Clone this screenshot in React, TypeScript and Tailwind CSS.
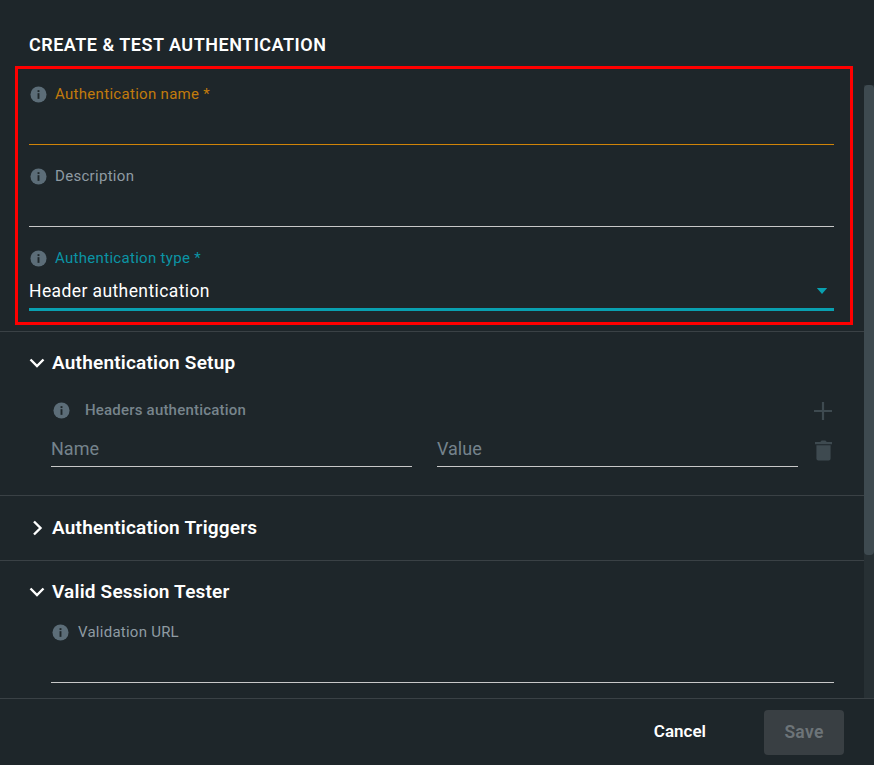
import { ReactNode } from "react";

const FONT = "font-['Roboto','Noto_Sans',sans-serif]";

function InfoIcon({ className = "" }: { className?: string }) {
  return (
    <svg viewBox="0 0 18 18" className={`w-[17px] h-[17px] shrink-0 ${className}`}>
      <circle cx="9" cy="9" r="8.5" fill="#5c6d78" />
      <rect x="8" y="4.4" width="2" height="2" fill="#1e262a" />
      <rect x="8" y="7.6" width="2" height="6" fill="#1e262a" />
    </svg>
  );
}

function Chevron({ open }: { open: boolean }) {
  return (
    <svg viewBox="0 0 16 16" className="w-4 h-4 shrink-0" fill="none" stroke="#fff" strokeWidth="2.4">
      {open ? <path d="M1.5 4.5 8 11l6.5-6.5" /> : <path d="M5 1.5 11.5 8 5 14.5" />}
    </svg>
  );
}

function Section({ title, open, className, children }: { title: string; open: boolean; className: string; children?: ReactNode }) {
  return (
    <section className={`border-b border-[#3a4145] ${className}`}>
      <div className="flex items-center gap-[7px] pl-[29px] h-[24px]">
        <Chevron open={open} />
        <h2 className="text-[19px] font-semibold text-white tracking-[0.2px]">{title}</h2>
      </div>
      {children}
    </section>
  );
}

export default function App() {
  return (
    <div className={`h-screen w-full overflow-hidden flex flex-col bg-[#1e262a] ${FONT}`}>
      <div className="flex-1 min-h-0 relative">
        {/* scrollbar */}
        <div className="absolute right-0 top-[85px] bottom-0 w-[10px] bg-[#273034]">
          <div className="h-[470px] rounded-[4px] bg-[#3e4a50]" />
        </div>

        <div className="pr-[10px]">
          <h1 className="pl-[29px] pt-[34px] h-[66px] text-[18px] leading-[22px] font-semibold text-white tracking-[0.5px] whitespace-nowrap">
            CREATE &amp; TEST AUTHENTICATION
          </h1>

          <div className="ml-[15px] w-[838px] h-[259px] border-[3px] border-[#f00] pl-[11px] pr-[16px]">
            <div className="h-[76px] border-b border-[#d08408]">
              <div className="flex items-center gap-[8px] pt-[16px] pl-[1px]">
                <InfoIcon />
                <span className="text-[15px] leading-[18px] tracking-[0.3px] text-[#c27b0c]">Authentication name *</span>
              </div>
            </div>
            <div className="h-[82px] border-b border-[#c8c8c8]">
              <div className="flex items-center gap-[8px] pt-[22px] pl-[1px]">
                <InfoIcon />
                <span className="text-[15px] leading-[18px] tracking-[0.3px] text-[#8f9ba3]">Description</span>
              </div>
            </div>
            <div className="h-[84px] border-b-[3px] border-[#09a0b0]">
              <div className="flex items-center gap-[8px] pt-[22px] pl-[1px]">
                <InfoIcon />
                <span className="text-[15px] leading-[18px] tracking-[0.3px] text-[#0b94a5]">Authentication type *</span>
              </div>
              <div className="flex items-center justify-between mt-[12px]">
                <span className="text-[17.5px] leading-[24px] tracking-[0.4px] text-white">Header authentication</span>
                <svg viewBox="0 0 12 7" className="w-[12px] h-[6px] mr-[6px]"><path d="M0 0h12L6 7z" fill="#09a0b0" /></svg>
              </div>
            </div>
          </div>

          <div className="h-[7px] border-b border-[#3a4145]" />

          <Section title="Authentication Setup" open className="pt-[19px] h-[164px]">
            <div className="pl-[51px] pr-[32px] pt-[25px]">
              <div className="flex items-center justify-between">
                <div className="flex items-center">
                  <InfoIcon className="ml-[2px]" />
                  <span className="ml-[15px] text-[15px] leading-[20px] tracking-[0.2px] font-medium text-[#77848c]">Headers authentication</span>
                </div>
                <svg viewBox="0 0 18 18" className="w-[18px] h-[18px] mt-[2px]" fill="none" stroke="#3e4a50" strokeWidth="2.2">
                  <path d="M9 0v18M0 9h18" />
                </svg>
              </div>
              <div className="flex items-start mt-[13px]">
                <div className="w-[361px] shrink-0 h-[34px] pt-[4px] border-b border-[#c8c8c8] text-[18px] leading-[24px] text-[#75838c]">Name</div>
                <div className="w-[361px] shrink-0 h-[34px] pt-[4px] ml-[25px] border-b border-[#c8c8c8] text-[18px] leading-[24px] text-[#75838c]">Value</div>
                <svg viewBox="0 0 18 22" className="w-[17px] h-[22px] ml-[17px] mt-[6px] shrink-0" fill="#3e4a50">
                  <path d="M0 2.5h5.5L7 1h4l1.5 1.5H18V5H0zM1.5 6h15v14a2 2 0 0 1-2 2h-11a2 2 0 0 1-2-2z" />
                </svg>
              </div>
            </div>
          </Section>

          <Section title="Authentication Triggers" open={false} className="pt-[20px] h-[65px]" />

          <Section title="Valid Session Tester" open className="pt-[19px] h-[138px] border-b-0">
            <div className="pl-[51px] pr-[30px]">
              <div className="flex items-center gap-[9px] pt-[19px] pl-[1px]">
                <InfoIcon />
                <span className="text-[15px] leading-[18px] tracking-[0.25px] text-[#8f9ba3]">Validation URL</span>
              </div>
              <div className="h-[42px] border-b border-[#c8c8c8]" />
            </div>
          </Section>
        </div>
      </div>

      <footer className="h-[67px] shrink-0 border-t border-[#3a4145] flex items-center justify-end pr-[30px]">
        <button className="text-[17px] font-semibold text-white mr-[58px]">Cancel</button>
        <button className="w-[80px] h-[45px] rounded-[4px] bg-[#393f43] text-[17.5px] tracking-[0.3px] font-semibold text-[#6d7478]">Save</button>
      </footer>
    </div>
  );
}
